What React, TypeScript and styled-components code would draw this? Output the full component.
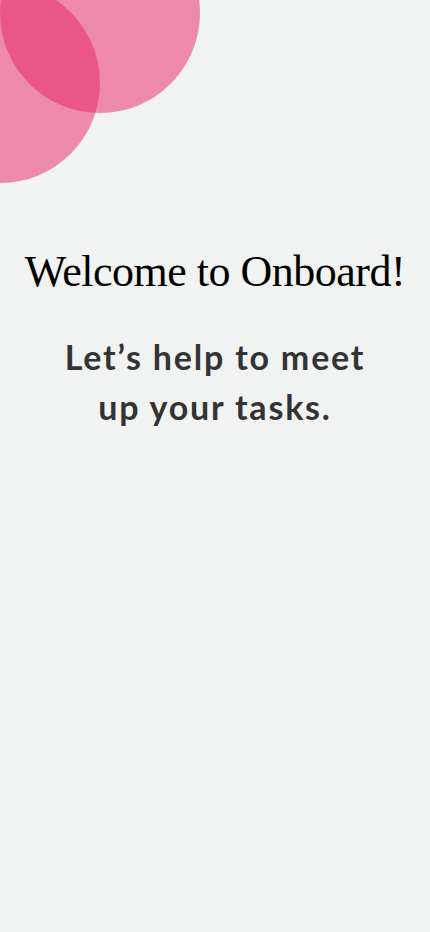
import React from "react";
import styled, { createGlobalStyle } from "styled-components";

const Global = createGlobalStyle`
  html, body { margin: 0; padding: 0; background: #f0f3f2; }
  #root { min-height: 932px; }
`;

const Screen = styled.div`
  position: relative;
  width: 430px;
  height: 932px;
  overflow: hidden;
  background: #f0f3f2;
  display: flex;
  flex-direction: column;
  align-items: center;
  padding-top: 247px;
  box-sizing: border-box;
`;

const Bubble = styled.div<{ $x: number; $y: number }>`
  position: absolute;
  width: 200px;
  height: 200px;
  border-radius: 50%;
  background: rgba(234, 40, 105, 0.52);
  left: ${(p) => p.$x}px;
  top: ${(p) => p.$y}px;
`;

const Title = styled.h1`
  margin: 0;
  font-family: "Liberation Serif", "DejaVu Serif", serif;
  font-weight: 400;
  font-size: 44px;
  line-height: 50px;
  color: #000;
  letter-spacing: -0.5px;
  white-space: nowrap;
`;

const Subtitle = styled.p`
  margin: 35px 0 0;
  font-family: "Lato", "Open Sans", sans-serif;
  font-weight: 700;
  font-size: 34px;
  line-height: 50px;
  letter-spacing: 1.8px;
  color: #333333;
  text-align: center;
  width: 330px;
`;

export default function App() {
  return (
    <>
      <Global />
      <Screen>
        <Bubble $x={0} $y={-87} />
        <Bubble $x={-100} $y={-17} />
        <Title>Welcome to Onboard!</Title>
        <Subtitle>Let’s help to meet up your tasks.</Subtitle>
      </Screen>
    </>
  );
}
